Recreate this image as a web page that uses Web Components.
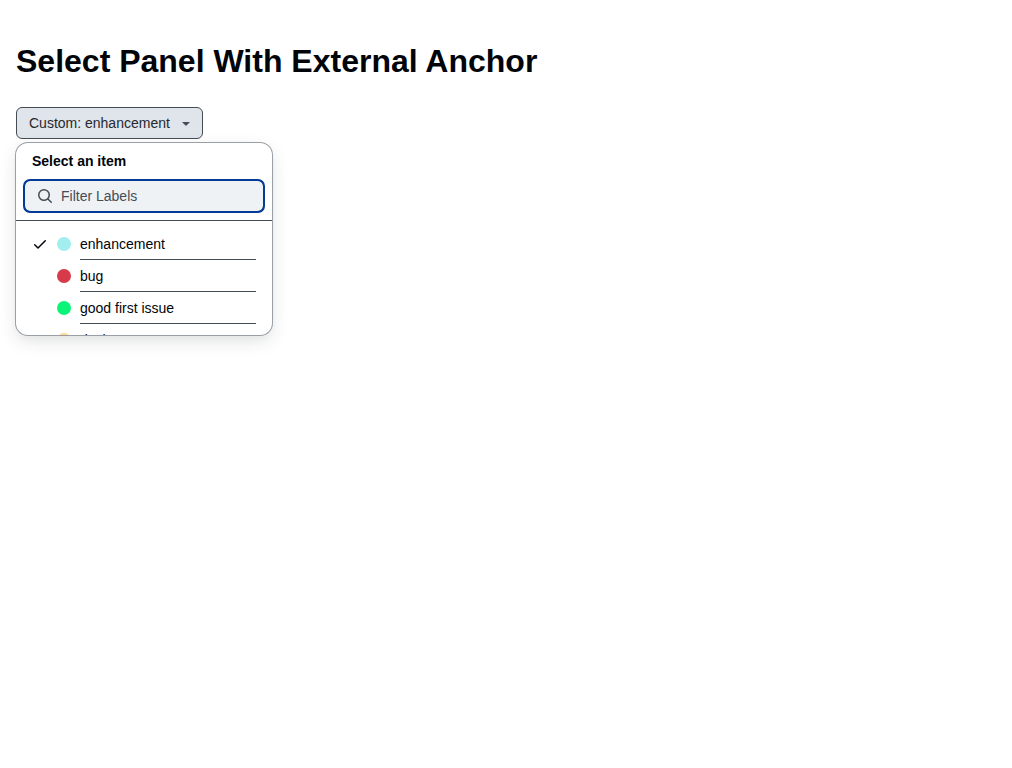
<!DOCTYPE html>
<html lang="en"><head><meta charset="utf-8"><title>Select Panel</title>
<style>html,body{margin:0}body{box-sizing:border-box;min-height:100vh;padding:16px;font:14px/20px "Liberation Sans",Arial,sans-serif;background:#fff;color:#010409}</style></head>
<body><demo-page></demo-page>
<script>
const define=(name,html)=>customElements.define(name,class extends HTMLElement{
  constructor(){super();this.attachShadow({mode:'open'}).innerHTML=html;}
});
define('anchor-button',`<style>
:host{display:block}
button{all:unset;box-sizing:border-box;display:flex;align-items:center;justify-content:space-between;width:187px;height:32px;padding:0 8px 0 12px;border:1px solid #454c54;border-radius:6px;background:#e0e4eb;color:#25292e}
svg{display:block}
</style><button><slot></slot><svg width="16" height="16" fill="#454c54"><path d="m4.427 7.427 3.396 3.396a.25.25 0 0 0 .354 0l3.396-3.396A.25.25 0 0 0 11.396 7H4.604a.25.25 0 0 0-.177.427Z"/></svg></button>`);
define('filter-input',`<style>
:host{display:flex;align-items:center;box-sizing:border-box;height:32px;margin:0 8px;padding:0 12px;border:1px solid #023b95;outline:2px solid #023b95;outline-offset:-1px;border-radius:6px;background:#eff2f5;color:#454c54;gap:8px}
svg{display:block}
</style><svg width="16" height="16" fill="#454c54"><path d="M10.68 11.74a6 6 0 0 1-7.922-8.982 6 6 0 0 1 8.982 7.922l3.04 3.04a.749.749 0 0 1-.326 1.275.749.749 0 0 1-.734-.215ZM11.5 7a4.499 4.499 0 1 0-8.997 0A4.499 4.499 0 0 0 11.5 7Z"/></svg><span><slot></slot></span>`);
define('label-item',`<style>
:host{display:grid;grid-template-columns:16px 16px 1fr;column-gap:8px;padding:0 16px;height:32px;align-items:center}
svg{display:none}:host([selected]) svg{display:block}
.check{height:16px}
.dot{width:14px;height:14px;margin:auto;border-radius:50%;background:var(--dot)}
.text{box-sizing:border-box;height:32px;line-height:20px;padding:6px 0 5px;border-bottom:1px solid #454c54}
</style><span class="check"><svg width="16" height="16" fill="#010409"><path d="M13.78 4.22a.75.75 0 0 1 0 1.06l-7.25 7.25a.75.75 0 0 1-1.06 0L2.22 9.28a.751.751 0 0 1 .018-1.042.751.751 0 0 1 1.042-.018L6 10.94l6.72-6.72a.75.75 0 0 1 1.06 0Z"/></svg></span><span class="dot"></span><span class="text"><slot></slot></span>`);
define('select-panel',`<style>
:host{display:flex;flex-direction:column;box-sizing:border-box;width:256px;height:192px;margin-top:4px;border-radius:12px;background:#fff;overflow:hidden;box-shadow:0 0 0 1px #9a9fa5,0 6px 12px -3px #25292e0a,0 6px 18px 0 #25292e1f}
h2{margin:0;padding:8px 16px 9px;font-size:14px;line-height:20px}
.list{flex:1;min-height:0;overflow:hidden;margin-top:8px;border-top:1px solid #454c54;padding-top:7px}
</style><h2><slot name="title"></slot></h2><slot name="filter"></slot><div class="list"><slot></slot></div>`);
define('demo-page',`<style>
:host{display:block}h1{margin:21px 0 22px;font-size:32px;line-height:48px}
</style><h1>Select Panel With External Anchor</h1>
<anchor-button>Custom: enhancement</anchor-button>
<select-panel><span slot="title">Select an item</span><filter-input slot="filter">Filter Labels</filter-input>
<label-item selected style="--dot:#a2eeef">enhancement</label-item>
<label-item style="--dot:#d73a4a">bug</label-item>
<label-item style="--dot:#0cf478">good first issue</label-item>
<label-item style="--dot:#ffd78e">design</label-item></select-panel>`);
</script></body></html>
